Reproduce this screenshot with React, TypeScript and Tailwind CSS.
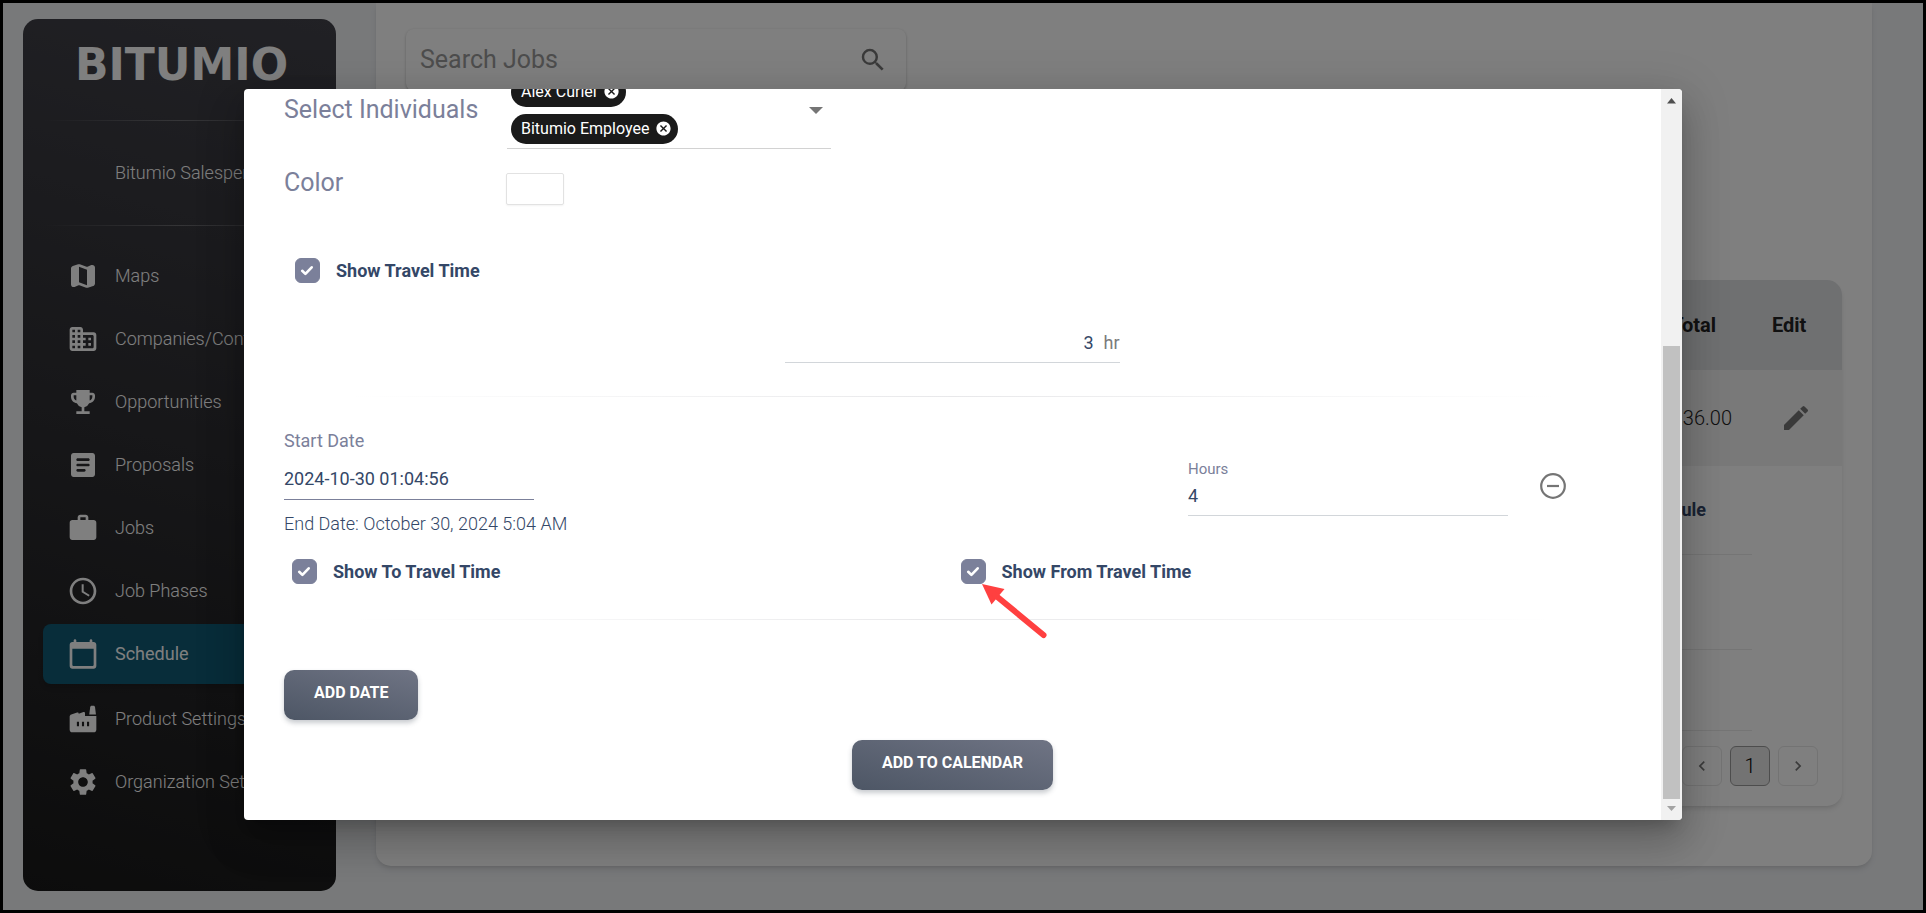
import React from 'react';
import clsx from 'clsx';
import {
	MdAccessTime,
	MdCancel,
	MdChevronLeft,
	MdChevronRight,
	MdEdit,
	MdEmojiEvents,
	MdSearch,
	MdSettings,
	MdWork,
} from 'react-icons/md';

type IconProps = { className?: string };

function MapIcon({ className }: IconProps) {
	return (
		<svg viewBox="0 0 24 24" fill="currentColor" className={className}>
			<path d="M14.65 4.98l-5-1.75c-.42-.15-.88-.15-1.3-.01L4.36 4.56C3.55 4.84 3 5.6 3 6.46v11.85c0 1.41 1.41 2.37 2.72 1.86l2.93-1.14c.22-.09.47-.09.69-.01l5 1.75c.42.15.88.15 1.3.01l3.99-1.34c.81-.27 1.36-1.04 1.36-1.9V5.69c0-1.41-1.41-2.37-2.72-1.86l-2.93 1.14c-.22.08-.46.09-.69.01zM15 18.89l-6-2.11V5.11l6 2.11v11.67z" />
		</svg>
	);
}

function CompanyIcon({ className }: IconProps) {
	return (
		<svg viewBox="0 0 24 24" fill="currentColor" className={className}>
			<path d="M12 7V5c0-1.1-.9-2-2-2H4c-1.1 0-2 .9-2 2v14c0 1.1.9 2 2 2h16c1.1 0 2-.9 2-2V9c0-1.1-.9-2-2-2h-8zM6 19H4v-2h2v2zm0-4H4v-2h2v2zm0-4H4V9h2v2zm0-4H4V5h2v2zm4 12H8v-2h2v2zm0-4H8v-2h2v2zm0-4H8V9h2v2zm0-4H8V5h2v2zm9 12h-7v-2h2v-2h-2v-2h2v-2h-2V9h7c.55 0 1 .45 1 1v8c0 .55-.45 1-1 1zm-1-8h-2v2h2v-2zm0 4h-2v2h2v-2z" />
		</svg>
	);
}

function ArticleIcon({ className }: IconProps) {
	return (
		<svg viewBox="0 0 24 24" fill="currentColor" className={className}>
			<path d="M19 3H5c-1.1 0-2 .9-2 2v14c0 1.1.9 2 2 2h14c1.1 0 2-.9 2-2V5c0-1.1-.9-2-2-2zm-6 14H8c-.55 0-1-.45-1-1s.45-1 1-1h5c.55 0 1 .45 1 1s-.45 1-1 1zm3-4H8c-.55 0-1-.45-1-1s.45-1 1-1h8c.55 0 1 .45 1 1s-.45 1-1 1zm0-4H8c-.55 0-1-.45-1-1s.45-1 1-1h8c.55 0 1 .45 1 1s-.45 1-1 1z" />
		</svg>
	);
}

function CalendarIcon({ className }: IconProps) {
	return (
		<svg viewBox="0 0 24 24" fill="currentColor" className={className}>
			<path d="M20 3h-1V2c0-.55-.45-1-1-1s-1 .45-1 1v1H7V2c0-.55-.45-1-1-1s-1 .45-1 1v1H4c-1.1 0-2 .9-2 2v16c0 1.1.9 2 2 2h16c1.1 0 2-.9 2-2V5c0-1.1-.9-2-2-2zm-1 18H5c-.55 0-1-.45-1-1V8h16v12c0 .55-.45 1-1 1z" />
		</svg>
	);
}

function FactoryIcon({ className }: IconProps) {
	return (
		<svg viewBox="0 0 24 24" fill="currentColor" className={className}>
			<path
				fillRule="evenodd"
				d="M2 10.300C2 9.500 2.400 8.900 3.200 8.600L7.600 7.100C8.300 6.900 8.800 7.300 8.800 8L12.300 6.800C13 6.600 13.500 7 13.500 7.600V9.700H22V20C22 21.100 21.100 22 20 22H4C2.900 22 2 21.100 2 20ZM7.400 14V17.500H9V14ZM11.200 14V17.500H12.800V14ZM15 14V17.500H16.600V14Z"
			/>
			<path d="M17.400 3.100C17.500 2.400 17.900 2 18.500 2H19.900C20.500 2 20.900 2.400 21 3.100L21.700 8.600H16.700Z" />
		</svg>
	);
}

const links = [
	{ label: 'Maps', Icon: MapIcon },
	{ label: 'Companies/Contacts', Icon: CompanyIcon },
	{ label: 'Opportunities', Icon: MdEmojiEvents },
	{ label: 'Proposals', Icon: ArticleIcon },
	{ label: 'Jobs', Icon: MdWork },
	{ label: 'Job Phases', Icon: MdAccessTime },
	{ label: 'Schedule', Icon: CalendarIcon, active: true },
	{ label: 'Product Settings', Icon: FactoryIcon },
	{ label: 'Organization Settings', Icon: MdSettings },
];

function Sidebar() {
	return (
		<aside className="mt-4 mb-[19px] ml-5 w-[313px] shrink-0 overflow-hidden rounded-[15px] bg-linear-[195deg,#42424a,#191919] px-5 text-white">
			<div className="flex h-[101px] items-center justify-center pb-2.5 pl-1 font-['DejaVu_Sans'] text-[44px] font-bold">
				BITUMIO
			</div>
			<hr className="h-px border-0 bg-linear-to-r from-transparent via-white/25 to-transparent" />
			<div className="flex h-[104px] items-center pl-[72px] text-lg font-light whitespace-nowrap">
				Bitumio Salesperson
			</div>
			<hr className="h-px border-0 bg-linear-to-r from-transparent via-white/25 to-transparent" />
			<nav className="mt-5 flex flex-col gap-[3px]">
				{links.map(({ label, Icon, active }) => (
					<a
						key={label}
						href="#"
						className={clsx(
							'flex h-[60px] items-center gap-4 rounded-lg pl-6 text-lg whitespace-nowrap',
							active ? 'mb-0.5 bg-[#105a75] shadow-md' : 'font-light'
						)}
					>
						<Icon className="size-8 shrink-0" />
						{label}
					</a>
				))}
			</nav>
		</aside>
	);
}

function Jobs() {
	return (
		<main className="mr-[51px] mb-11 ml-10 flex grow flex-col rounded-b-[15px] bg-white px-[30px] shadow-md">
			<div className="mt-[26px] flex h-[62px] w-[500px] items-center rounded-lg pr-[18px] pl-3.5 shadow-[0_1px_3px_rgba(0,0,0,0.25)]">
				<input
					aria-label="Search Jobs"
					placeholder="Search Jobs"
					className="grow bg-transparent text-[25px] outline-none placeholder:text-[#9a9a9a]"
				/>
				<button>
					<MdSearch className="size-[30px] text-[#757575]" />
				</button>
			</div>
			<div className="mt-[189px] rounded-[15px] shadow-md">
				<table className="w-full overflow-hidden rounded-t-[15px]">
					<thead>
						<tr className="h-[90px] bg-[#dee0e3] text-xl text-[#222]">
							<th className="pr-6 text-right font-bold">Total</th>
							<th className="w-[102px] pl-8 text-left font-bold">Edit</th>
						</tr>
					</thead>
					<tbody>
						<tr className="h-24 bg-[#f3f3f3] text-xl font-light text-[#222]">
							<td className="pr-2 text-right">36.00</td>
							<td className="pl-10">
								<button className="block">
									<MdEdit className="size-8 text-[#757575]" />
								</button>
							</td>
						</tr>
					</tbody>
				</table>
				<div className="pr-[90px]">
					<table className="w-full text-lg text-[#344767]">
						<thead>
							<tr className="h-[88px] border-b border-[#eaeaea]">
								<th className="pr-[46px] text-right font-bold">Schedule</th>
							</tr>
						</thead>
						<tbody>
							<tr className="h-[95px] border-b border-[#eaeaea]">
								<td />
							</tr>
							<tr className="h-[81px] border-b border-[#eaeaea]">
								<td />
							</tr>
						</tbody>
					</table>
				</div>
				<div className="flex justify-end gap-2 pt-[15px] pr-6 pb-5 text-xl font-light">
					<button className="flex size-10 items-center justify-center rounded-md border border-[#e6e6e6] text-[#777]">
						<MdChevronLeft className="size-5" />
					</button>
					<button className="flex size-10 items-center justify-center rounded-md border border-[#9b9b9b] bg-[#e6e6e6]">
						1
					</button>
					<button className="flex size-10 items-center justify-center rounded-md border border-[#e6e6e6] text-[#777]">
						<MdChevronRight className="size-5" />
					</button>
				</div>
			</div>
		</main>
	);
}

function Chip({ children }: { children: React.ReactNode }) {
	return (
		<span className="flex h-[30px] items-center gap-1.5 rounded-full bg-[#1a1a1a] pr-1.5 pl-2.5 text-base text-white">
			{children}
			<button>
				<MdCancel className="size-[17px]" />
			</button>
		</span>
	);
}

function Checkbox({ label, children }: { label: string; children?: React.ReactNode }) {
	return (
		<label className="flex items-center gap-4 text-lg font-bold text-[#344767]">
			<span className="relative block size-[25px]">
				<input
					type="checkbox"
					defaultChecked
					className="peer block size-[25px] appearance-none rounded-md border border-[#7b809a] checked:bg-[#7b809a]"
				/>
				<svg
					viewBox="0 0 25 25"
					fill="none"
					stroke="white"
					strokeWidth="2.6"
					strokeLinecap="round"
					strokeLinejoin="round"
					className="pointer-events-none absolute inset-0 opacity-0 peer-checked:opacity-100"
				>
					<path d="M7.2 12.8l3.2 3.1 6.3-6.6" />
				</svg>
				{children}
			</span>
			{label}
		</label>
	);
}

function Divider() {
	return (
		<hr className="mt-[33px] h-px border-0 bg-linear-to-r from-transparent from-5% via-[#e8e8ea] to-transparent to-95%" />
	);
}

function Button({ className, children }: { className?: string; children: React.ReactNode }) {
	return (
		<button
			className={clsx(
				'h-[50px] rounded-[10px] bg-linear-[195deg,#6f7484,#4d5665] px-[30px] pb-1 text-base font-bold text-white uppercase shadow-[0_3px_5px_rgba(73,83,97,0.3)]',
				className
			)}
		>
			{children}
		</button>
	);
}

function Arrow() {
	return (
		<svg viewBox="0 0 68 56" className="pointer-events-none absolute top-[25px] left-[21px] h-14 w-[68px]">
			<path d="M0 0L22.5 5L9.5 20.5Z" fill="#ff4040" />
			<path d="M13 11L61.500 51" stroke="#ff4040" strokeWidth="6" strokeLinecap="round" />
		</svg>
	);
}

function Scrollbar() {
	return (
		<div className="flex w-[21px] shrink-0 flex-col items-center bg-[#f1f1f1]">
			<svg viewBox="0 0 21 21" className="size-[21px]">
				<path d="M6 14.500L10.500 9L15 14.500Z" fill="#505050" />
			</svg>
			<div className="mt-[236px] w-[17px] grow bg-[#c1c1c1]" />
			<svg viewBox="0 0 21 21" className="size-[21px]">
				<path d="M6 7L15 7L10.500 12Z" fill="#a3a3a3" />
			</svg>
		</div>
	);
}

function ScheduleDialog() {
	return (
		<div
			role="dialog"
			className="flex h-[80vh] w-[calc(75%-2px)] overflow-hidden rounded bg-white shadow-[0_11px_15px_-7px_rgba(0,0,0,0.2),0_24px_38px_3px_rgba(0,0,0,0.14),0_9px_46px_8px_rgba(0,0,0,0.12)]"
		>
			{/* scrolled to the end, so the form hangs from the bottom edge */}
			<div className="flex grow flex-col justify-end px-10 pb-[30px] text-[#344767] *:shrink-0">
				<div className="flex items-center">
					<span className="w-[223px] pb-0.5 text-[25px] text-[#7b809a]">Select Individuals</span>
					<div className="flex w-[324px] items-center border-b border-[#d2d2d2] pt-1 pr-2 pb-1 pl-1">
						<div className="flex grow flex-col items-start gap-[7px]">
							<Chip>Alex Curiel</Chip>
							<Chip>Bitumio Employee</Chip>
						</div>
						<button>
							<svg viewBox="0 0 14 7" className="h-[7px] w-3.5">
								<path d="M0 0H14L7 7Z" fill="#757575" />
							</svg>
						</button>
					</div>
				</div>
				<div className="mt-6 flex items-start">
					<label htmlFor="color" className="w-[222px] text-[25px] leading-5 text-[#7b809a]">
						Color
					</label>
					<button
						id="color"
						className="h-8 w-[58px] rounded-xs border border-[#e2e2e2] bg-white shadow-xs"
					/>
				</div>
				<div className="mt-[52px] ml-[11px] flex">
					<Checkbox label="Show Travel Time" />
				</div>
				<div className="mx-auto mt-10 flex h-[38px] w-1/4 items-center gap-2.5 border-b border-[#d2d6da] text-lg">
					<input aria-label="hr" defaultValue="3" className="min-w-0 grow text-right outline-none" />
					<span className="text-[#7b7b7b]">hr</span>
				</div>
				<Divider />
				<div className="mt-8 flex items-start justify-between text-lg">
					<div className="flex flex-col">
						<label htmlFor="start" className="leading-6 text-[#7b809a]">
							Start Date
						</label>
						<input
							id="start"
							defaultValue="2024-10-30 01:04:56"
							className="mt-2.5 h-[37px] w-[250px] border-b border-[#7b809a] pb-1 outline-none"
						/>
						<span className="mt-3 leading-6 font-light">End Date: October 30, 2024 5:04 AM</span>
					</div>
					<div className="mt-7 mr-[55px] flex items-center gap-8">
						<div className="flex w-80 flex-col border-b border-[#d2d6da]">
							<label htmlFor="hours" className="text-[15px] leading-6 text-[#7b809a]">
								Hours
							</label>
							<input id="hours" defaultValue="4" className="h-[34px] pb-1 outline-none" />
						</div>
						<button>
							<svg viewBox="0 0 26 26" fill="none" stroke="#757575" className="size-[26px]">
								<circle cx="13" cy="13" r="11.800" strokeWidth="2.200" />
								<path d="M7 13h12" strokeWidth="2.200" />
							</svg>
						</button>
					</div>
				</div>
				<div className="mt-[22px] grid grid-cols-2 *:pl-2">
					<Checkbox label="Show To Travel Time" />
					<Checkbox label="Show From Travel Time">
						<Arrow />
					</Checkbox>
				</div>
				<Divider />
				<Button className="mt-[50px] self-start">Add Date</Button>
				<Button className="mt-5 self-center">Add to Calendar</Button>
			</div>
			<Scrollbar />
		</div>
	);
}

export default function App() {
	return (
		<div className="relative flex h-screen overflow-hidden border-3 border-black bg-[#f0f2f5] font-[Roboto,sans-serif]">
			<Sidebar />
			<Jobs />
			<div className="absolute inset-0 flex items-center justify-center bg-black/50 pb-1">
				<ScheduleDialog />
			</div>
		</div>
	);
}
